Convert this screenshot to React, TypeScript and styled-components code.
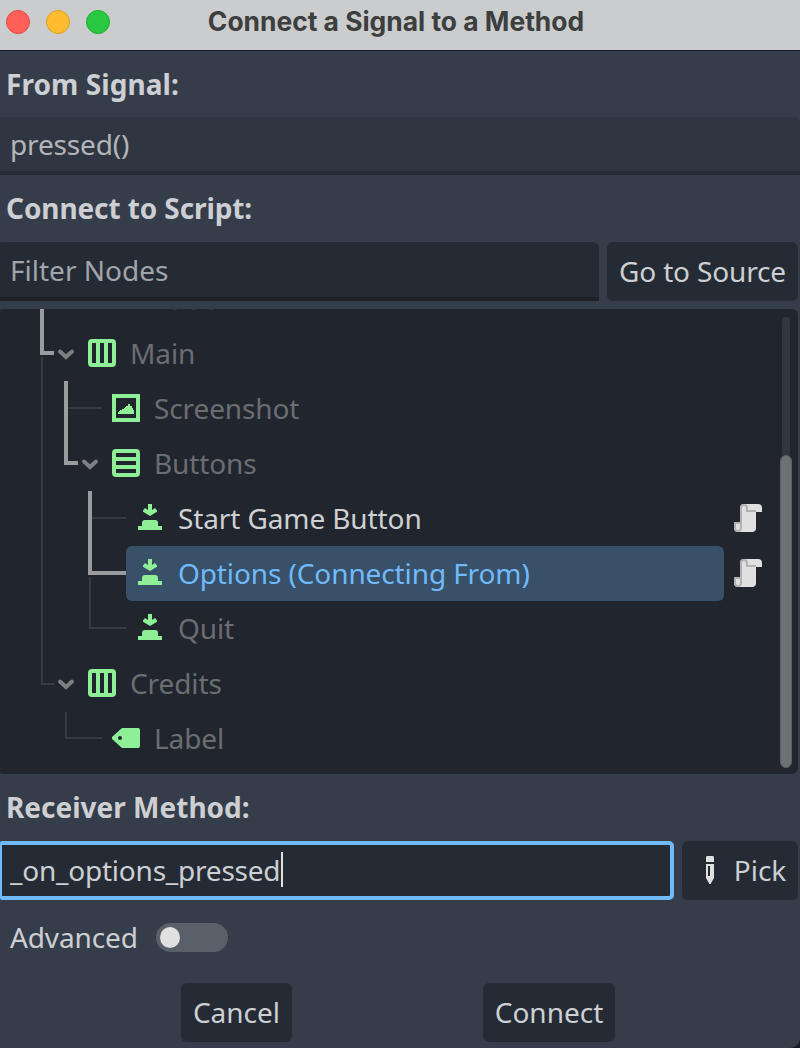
import React from "react";
import styled, { createGlobalStyle, css } from "styled-components";

const GREEN = "#8eef97";

const GlobalStyle = createGlobalStyle`
  html, body { margin: 0; background: #1b1d25; }
  *, *::before, *::after { box-sizing: border-box; }
`;

const Window = styled.main`
  width: 800px;
  height: 1048px;
  overflow: hidden;
  display: flex;
  flex-direction: column;
  border-bottom-right-radius: 10px;
  background: #363d4a;
  color: #cdcfd2;
  font: 28px/38px "Noto Sans", sans-serif;
`;

const TitleBar = styled.header`
  flex: none;
  height: 51px;
  display: grid;
  grid-template-columns: 116px 1fr 124px;
  background: #cbcccd;
  border-bottom: 1px solid #161a2b;
`;

const Lights = styled.div`
  display: flex;
  gap: 16px;
  padding: 10px 0 0 6px;
`;

const Light = styled.i<{ $fill: string; $edge: string }>`
  width: 24px;
  height: 24px;
  border-radius: 50%;
  background: ${(p) => p.$fill};
  border: 1px solid ${(p) => p.$edge};
`;

const Title = styled.h1`
  margin: 0;
  padding-top: 1px;
  text-align: center;
  white-space: nowrap;
  font: 700 26.400px/40px Inter, sans-serif;
  color: #3d3e3e;
`;

const Heading = styled.h2<{ $height: number; $tracking?: number }>`
  flex: none;
  margin: 0;
  padding-left: 6px;
  height: ${(p) => p.$height}px;
  line-height: ${(p) => p.$height}px;
  font-size: 28px;
  font-weight: 700;
  letter-spacing: ${(p) => p.$tracking ?? 0}px;
`;

const FieldRow = styled.div`
  flex: none;
  display: flex;
  gap: 8px;
  padding-right: 2px;
`;

const Field = styled.div<{ $kind: "readonly" | "filter" | "focus" }>`
  flex: 1;
  height: 59px;
  display: flex;
  align-items: center;
  padding: 0 10px;
  border-radius: 2px 6px 0 0;
  background: #252b34;
  border-bottom: 4px solid #1e2228;
  ${(p) =>
    p.$kind === "readonly" &&
    css`
      flex: none;
      height: 58px;
      background: #303641;
      border-color: #272d37;
      color: #b3b5b9;
      letter-spacing: -0.15px;
    `}
  ${(p) =>
    p.$kind === "filter" &&
    css`
      color: #a1a4a8;
    `}
  ${(p) =>
    p.$kind === "focus" &&
    css`
      border: 4px solid #70bafa;
      border-left-width: 2px;
      border-radius: 2px 5px 5px 2px;
      padding: 0 8px;
      letter-spacing: -0.22px;
    `}
`;

const Text = styled.span<{ $tracking?: number }>`
  margin-top: -2px;
  white-space: nowrap;
  letter-spacing: ${(p) => (p.$tracking === undefined ? "inherit" : `${p.$tracking}px`)};
`;

const Caret = styled.span`
  width: 2px;
  height: 35px;
  margin: -2px 0 0 1px;
  background: #dfe0e2;
`;

const Button = styled.button<{ $width: number }>`
  flex: none;
  width: ${(p) => p.$width}px;
  height: 59px;
  display: flex;
  align-items: center;
  justify-content: center;
  gap: 8px;
  padding: 0;
  border: 0;
  border-radius: 6px;
  background: #252b34;
  color: inherit;
  font: inherit;
`;

const TreePanel = styled.section`
  flex: none;
  position: relative;
  height: 465px;
  margin: 8px 2px 0 0;
  border-radius: 2px 6px 6px 2px;
  overflow: hidden;
  background: #21262e;
`;

const Rows = styled.ul`
  list-style: none;
  margin: -38px 74px 0 0;
  padding: 0;
`;

const Row = styled.li<{ $tone: string }>`
  height: 55px;
  display: flex;
  align-items: center;
  color: ${(p) => p.$tone};
`;

const Indent = styled.span<{ $width: number }>`
  flex: none;
  width: ${(p) => p.$width}px;
  display: flex;
  justify-content: flex-end;
`;

const Entry = styled.span<{ $selected?: boolean }>`
  flex: 1;
  height: 55px;
  display: flex;
  align-items: center;
  gap: 12px;
  padding-left: 8px;
  border-radius: 6px;
  background: ${(p) => (p.$selected ? "#385068" : "transparent")};
`;

const ScriptSlot = styled.span`
  width: 32px;
  height: 32px;
  margin: 1px -40px 0 8px;
`;

const Guides = styled.svg`
  position: absolute;
  left: 0;
  top: 0;
`;

const Track = styled.div`
  position: absolute;
  left: 782px;
  top: 8px;
  width: 8px;
  height: 451px;
  border-radius: 4px;
  background: #32363e;
`;

const Thumb = styled.div`
  position: absolute;
  left: -2px;
  top: 138px;
  width: 12px;
  height: 313px;
  border-radius: 6px;
  background: #6d7075;
  border: 1px solid #5c5f65;
`;

const AdvancedRow = styled.label`
  flex: none;
  height: 76px;
  display: flex;
  align-items: center;
  gap: 18px;
  padding-left: 10px;
`;

const Switch = styled.span`
  width: 72px;
  height: 29px;
  margin-top: -1px;
  padding: 4px;
  border-radius: 15px;
  background: #5a6069;
`;

const Knob = styled.i`
  display: block;
  width: 20px;
  height: 21px;
  border-radius: 50%;
  background: #e0e0e0;
`;

const Actions = styled.footer`
  display: flex;
  gap: 191px;
  margin-top: 7px;
  padding-left: 181px;
`;

const Icon = styled.svg.attrs({ viewBox: "0 0 16 16", width: 32, height: 32 })`
  display: block;
  flex: none;
  margin-top: -1px;
`;

type Kind = "hbox" | "vbox" | "texture" | "button" | "label";

function NodeIcon({ kind }: { kind: Kind }) {
  return (
    <Icon fill={GREEN}>
      {kind === "hbox" && (
        <path fillRule="evenodd" d="M3 1h10a2 2 0 0 1 2 2v10a2 2 0 0 1-2 2H3a2 2 0 0 1-2-2V3a2 2 0 0 1 2-2zM3 3v10h2V3zM7 3v10h2V3zM11 3v10h2V3z" />
      )}
      {kind === "vbox" && (
        <path fillRule="evenodd" d="M3 1h10a2 2 0 0 1 2 2v10a2 2 0 0 1-2 2H3a2 2 0 0 1-2-2V3a2 2 0 0 1 2-2zM3 3v2h10V3zM3 7v2h10V7zM3 11v2h10v-2z" />
      )}
      {kind === "texture" && (
        <path
          fillRule="evenodd"
          shapeRendering="crispEdges"
          d="M1 1h14v14H1zM3 3v10h10V3zM9 6h1v1h1v1h.5v1H12v2H4v-1h.5v-.5H5V9h1v-.5h1V8h.5v-.5H8V7h1z"
        />
      )}
      {kind === "button" && (
        <path d="M7 1h2v3l1.500-1 1 1.200v.7L8 7 4.500 4.900v-.7L5.500 3 7 4zM4 12v-1.500A1.500 1.500 0 0 1 5.500 9h5a1.500 1.500 0 0 1 1.500 1.500V12h2v2H2v-2z" />
      )}
      {kind === "label" && (
        <path fillRule="evenodd" d="M6 3h8a1 1 0 0 1 1 1v8a1 1 0 0 1-1 1H6L1 8.500v-1zM5 7a1 1 0 0 0 0 2 1 1 0 0 0 0-2z" />
      )}
    </Icon>
  );
}

function ScriptIcon() {
  return (
    <Icon>
      <path fill="#e0e0e0" d="M6 1h7a2 2 0 0 1 2 2v2h-3v8a2 2 0 0 1-2 2H3a2 2 0 0 1-2-2v-3h3V3a2 2 0 0 1 2-2z" />
      <path fill="none" stroke="#b2b2b2" d="M1.500 10.500v2.500a1.500 1.500 0 0 0 3 0V3A1.500 1.500 0 0 1 7.500 3v1.500H12M1 10.500h3" />
    </Icon>
  );
}

function PencilIcon() {
  return (
    <Icon fill="#e0e0e0">
      <path fillRule="evenodd" d="M6 4V1.700Q6 1 6.700 1h2.600Q10 1 10 1.700V4zM6 5h4v7L8.300 15h-.6L6 12zM7 6v5h1V6z" />
    </Icon>
  );
}

function Arrow() {
  return (
    <svg width="24" height="16" viewBox="0 0 24 16">
      <path d="M6 5.500l6 5.500 6-5.500" fill="none" stroke="#7c7f84" strokeWidth="4" strokeLinecap="round" strokeLinejoin="miter" />
    </svg>
  );
}

const DIM = "#6b6d71";

interface Node {
  name: string;
  kind: Kind;
  indent: number;
  tone?: string;
  open?: boolean;
  script?: boolean;
  selected?: boolean;
}

const nodes: Node[] = [
  { name: "Main", kind: "hbox", indent: 78, open: true },
  { name: "Screenshot", kind: "texture", indent: 102 },
  { name: "Buttons", kind: "vbox", indent: 102, open: true },
  { name: "Start Game Button", kind: "button", indent: 126, tone: "#cfd0d2", script: true },
  { name: "Options (Connecting From)", kind: "button", indent: 126, tone: "#70bafa", script: true, selected: true },
  { name: "Quit", kind: "button", indent: 126 },
  { name: "Credits", kind: "hbox", indent: 78, open: true },
  { name: "Label", kind: "label", indent: 102 },
];

export default function App() {
  return (
    <Window>
      <GlobalStyle />
      <TitleBar>
        <Lights>
          <Light $fill="#ff5f57" $edge="#e24a43" />
          <Light $fill="#febc2e" $edge="#dfa023" />
          <Light $fill="#28c840" $edge="#1dab2d" />
        </Lights>
        <Title>Connect a Signal to a Method</Title>
      </TitleBar>
      <Heading $height={66} $tracking={0.06}>
        From Signal:
      </Heading>
      <Field $kind="readonly">pressed()</Field>
      <Heading $height={67} $tracking={-0.1}>
        Connect to Script:
      </Heading>
      <FieldRow>
        <Field $kind="filter">Filter Nodes</Field>
        <Button $width={191}>
          <Text $tracking={-0.15}>Go to Source</Text>
        </Button>
      </FieldRow>
      <TreePanel>
        <Guides width="240" height="465" fill="none">
          <path stroke="#363a41" strokeWidth="2" d="M42 48V375H54M68 99H102M92 209H126M90 268V319H126M66 403V429H102" />
          <path stroke="#9b9c9f" strokeWidth="4" d="M42 0V44H54M66 72V154H78M90 182V264H126" />
          <path stroke="#30353d" d="M173 .5h4M192 .5h4M209 .5h4" />
        </Guides>
        <Rows>
          <Row $tone={DIM} />
          {nodes.map((n) => (
            <Row key={n.name} $tone={n.tone ?? DIM}>
              <Indent $width={n.indent}>{n.open && <Arrow />}</Indent>
              <Entry $selected={n.selected}>
                <NodeIcon kind={n.kind} />
                <Text $tracking={-0.11}>{n.name}</Text>
              </Entry>
              {n.script && (
                <ScriptSlot>
                  <ScriptIcon />
                </ScriptSlot>
              )}
            </Row>
          ))}
        </Rows>
        <Track>
          <Thumb />
        </Track>
      </TreePanel>
      <Heading $height={67}>Receiver Method:</Heading>
      <FieldRow>
        <Field $kind="focus">
          <Text>_on_options_pressed</Text>
          <Caret />
        </Field>
        <Button $width={116}>
          <PencilIcon />
          <Text>Pick</Text>
        </Button>
      </FieldRow>
      <AdvancedRow>
        <Text $tracking={-0.12}>Advanced</Text>
        <Switch>
          <Knob />
        </Switch>
      </AdvancedRow>
      <Actions>
        <Button $width={111}>
          <Text>Cancel</Text>
        </Button>
        <Button $width={132}>
          <Text>Connect</Text>
        </Button>
      </Actions>
    </Window>
  );
}
